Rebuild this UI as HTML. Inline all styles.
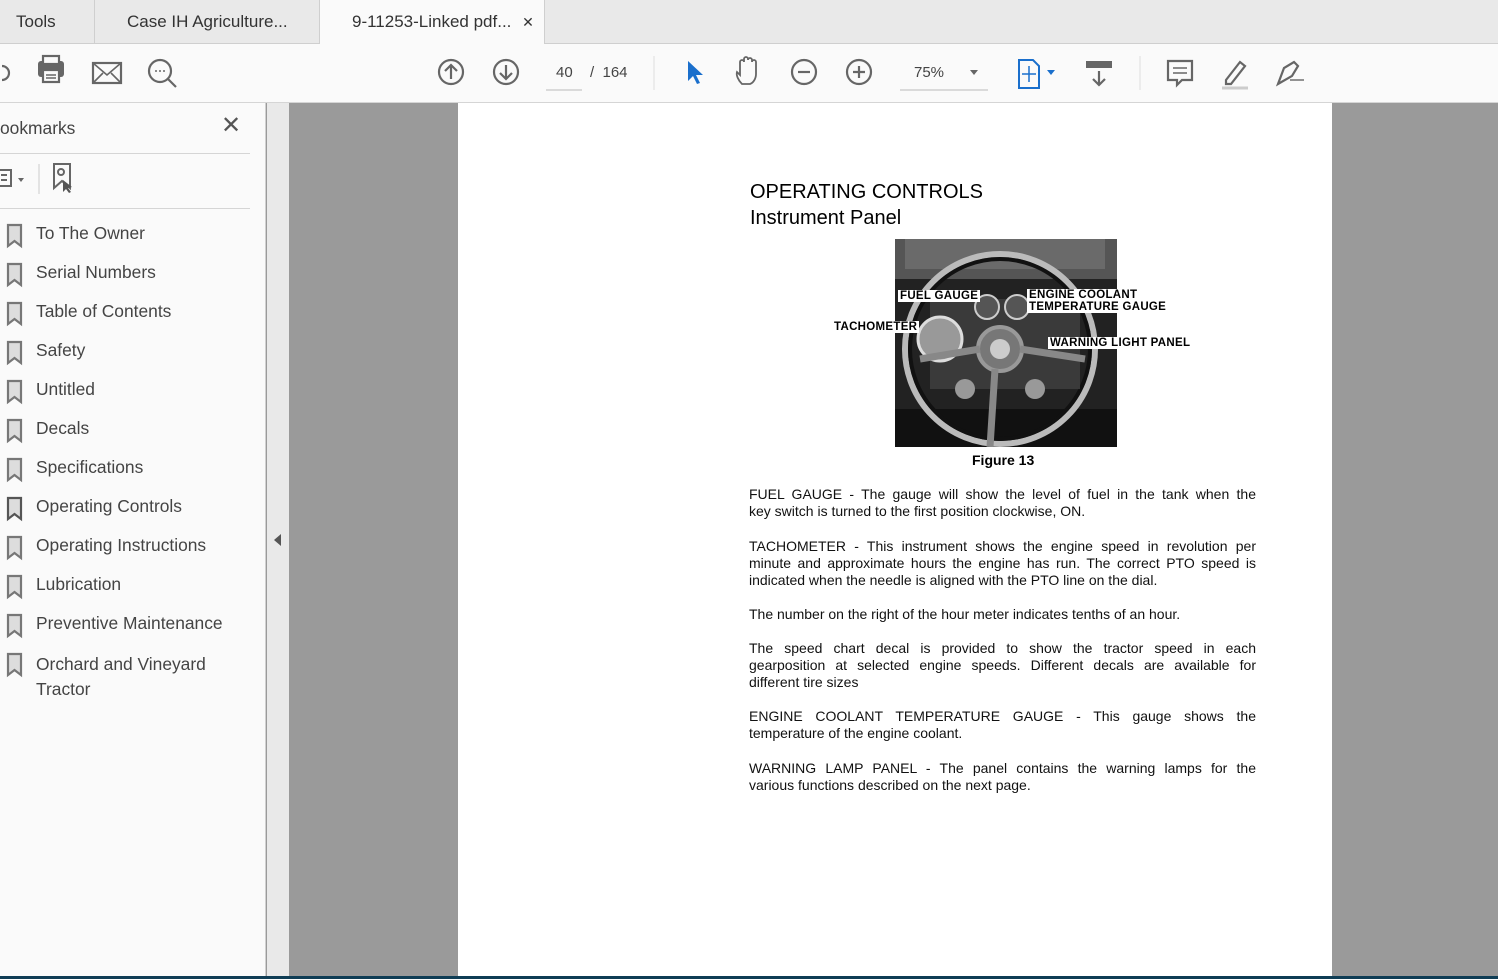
<!DOCTYPE html>
<html><head><meta charset="utf-8"><style>
*{margin:0;padding:0;box-sizing:border-box}
body{width:1498px;height:979px;overflow:hidden;position:relative;background:#9a9a9a;font-family:"Liberation Sans",sans-serif}
.abs{position:absolute}
#tabs{left:0;top:0;width:1498px;height:44px;background:#e9e9e9;border-bottom:1px solid #cfcfcf}
.tab{position:absolute;top:0;height:44px;font-size:17px;color:#333;line-height:44px;border-right:1px solid #cfcfcf}
#tb{left:0;top:44px;width:1498px;height:59px;background:#fafafa;border-bottom:1px solid #d5d5d5}
#side{left:0;top:103px;width:266px;height:873px;background:#fafafa;border-right:1px solid #d0d0d0}
#strip{left:267px;top:103px;width:22px;height:873px;background:#e9e9e9}
#page{left:458px;top:103px;width:874px;height:873px;background:#fff}
.bm{position:absolute;left:36px;font-size:17.4px;color:#444}
.p{position:absolute;left:749px;width:507px;font-size:14px;line-height:17px;color:#111}
.p div{text-align:justify;text-align-last:justify;height:17px;white-space:nowrap}
.p div.l{text-align-last:left}
.lbl{position:absolute;background:#fff;font-weight:bold;font-size:11.5px;letter-spacing:0.3px;color:#000;line-height:12px;padding:0 2px}
svg{position:absolute}
</style></head><body>
<div id="tabs" class="abs">
<div class="tab" style="left:0;width:95px;padding-left:16px">Tools</div>
<div class="tab" style="left:95px;width:225px;padding-left:32px">Case IH Agriculture...</div>
<div class="tab" style="left:320px;width:225px;padding-left:32px;background:#fafafa;height:45px">9-11253-Linked pdf... <span style="font-size:14px;margin-left:6px">✕</span></div>
</div>
<div id="tb" class="abs">
<svg width="1498" height="59" style="left:0;top:0" fill="none" stroke="#666" stroke-width="2.2">
<path d="M2 22a6 6 0 0 1 0 14" />
<rect x="38" y="17" width="26" height="16" rx="3" fill="#666" stroke="none"/><rect x="43" y="12" width="16" height="8" fill="#fafafa"/><rect x="43" y="26" width="16" height="12" fill="#fafafa"/><path d="M46 31h10M46 34h10" stroke-width="1.5"/>
<rect x="93" y="19" width="28" height="20"/><path d="M93 19l14 12 14-12M93 39l10-10M121 39l-10-10" stroke-width="1.6"/>
<circle cx="160" cy="27" r="11"/><path d="M168 35l8 8"/><path d="M155 27h2M159 27h2M163 27h2" stroke-width="1.6"/>
<circle cx="451" cy="28" r="12"/><path d="M451 35V21M445 27l6-6 6 6"/>
<circle cx="506" cy="28" r="12"/><path d="M506 21v14M500 29l6 6 6-6"/>
<path d="M546 46h36" stroke="#bbb" stroke-width="1"/>
<path d="M654 12v34" stroke="#ddd" stroke-width="1"/>
<path d="M688 17l0 20 5-5 4 8 3-1-4-8 7 0z" fill="#1a6fcc" stroke="none"/>
<path d="M742 40c-4-4-6-9-5-12l3 3V18a2 2 0 0 1 4 0v-3a2 2 0 0 1 4 0v1a2 2 0 0 1 4 0v2a2 2 0 0 1 4 0v12c0 5-3 9-6 10z" stroke-width="1.8"/>
<circle cx="804" cy="28" r="12"/><path d="M798 28h12"/>
<circle cx="859" cy="28" r="12"/><path d="M853 28h12M859 22v12"/>
<path d="M900 46h88" stroke="#bbb" stroke-width="1"/><path d="M970 26h8l-4 5z" fill="#666" stroke="none"/>
<path d="M1019 16h14l6 6v22h-20z" stroke="#1a6fcc" stroke-width="2"/><path d="M1029 22v16M1022 30h14" stroke="#1a6fcc" stroke-width="1.5"/><path d="M1047 26h8l-4 5z" fill="#1a6fcc" stroke="none"/>
<rect x="1086" y="17" width="26" height="7" fill="#666" stroke="none"/><path d="M1099 27v14M1093 35l6 6 6-6"/>
<path d="M1140 12v34" stroke="#ddd" stroke-width="1"/>
<path d="M1168 17h24v19h-10l-5 5v-5h-9z"/><path d="M1173 24h14M1173 29h14" stroke-width="1.5"/>
<path d="M1226 36l14-18 5 4-14 18h-5z"/><path d="M1222 44h26" stroke="#ccc" stroke-width="3"/>
<path d="M1278 40l6-16 10-6 4 4-6 10-14 8z"/><path d="M1290 36h14" stroke-width="1.4"/>
</svg>
<div class="abs" style="left:556px;top:20px;font-size:15px;color:#444">40</div>
<div class="abs" style="left:590px;top:20px;font-size:15px;color:#444">/ &nbsp;164</div>
<div class="abs" style="left:914px;top:20px;font-size:15px;color:#444">75%</div>
</div>
<div id="side" class="abs">
<div class="abs" style="left:0;top:15px;font-size:17.4px;color:#444">ookmarks</div>
<div class="abs" style="left:221px;top:8px;font-size:24px;color:#555">✕</div>
<div class="abs" style="left:0;top:50px;width:250px;height:1px;background:#d5d5d5"></div>
<svg width="120" height="50" style="left:0;top:55px" fill="none" stroke="#666" stroke-width="2"><rect x="-4" y="12" width="15" height="16"/><path d="M1 17h6M1 22h6"/><path d="M18 20h6l-3 4z" fill="#666" stroke="none"/><path d="M39 6v30" stroke="#ccc" stroke-width="1"/><path d="M54 6h16v24l-8-7-8 7z"/><circle cx="61" cy="14" r="3"/><path d="M63 22l0 12 3-3 3 4 2-1-3-4 4-1z" fill="#555" stroke="none"/></svg>
<div class="abs" style="left:0;top:105px;width:250px;height:1px;background:#d5d5d5"></div>
</div>
<div id="strip" class="abs"><div class="abs" style="left:7px;top:431px;width:0;height:0;border-top:6px solid transparent;border-bottom:6px solid transparent;border-right:7px solid #555"></div></div>
<svg width="30" height="480" style="left:0;top:222px" fill="#ddd" stroke="#777" stroke-width="2.2">
<g id="b"><path d="M8 3h13v21l-6.5-5-6.5 5z"/></g>
<use href="#b" y="39"/><use href="#b" y="78"/><use href="#b" y="117"/><use href="#b" y="156"/><use href="#b" y="195"/><use href="#b" y="234"/>
<path d="M8 276h13v21l-6.5-5-6.5 5z" stroke="#555"/>
<use href="#b" y="312"/><use href="#b" y="351"/><use href="#b" y="390"/><use href="#b" y="429"/>
</svg>
<div class="bm" style="top:223px">To The Owner</div>
<div class="bm" style="top:262px">Serial Numbers</div>
<div class="bm" style="top:301px">Table of Contents</div>
<div class="bm" style="top:340px">Safety</div>
<div class="bm" style="top:379px">Untitled</div>
<div class="bm" style="top:418px">Decals</div>
<div class="bm" style="top:457px">Specifications</div>
<div class="bm" style="top:496px">Operating Controls</div>
<div class="bm" style="top:535px">Operating Instructions</div>
<div class="bm" style="top:574px">Lubrication</div>
<div class="bm" style="top:613px">Preventive Maintenance</div>
<div class="bm" style="top:652px;line-height:25px">Orchard and Vineyard<br>Tractor</div>
<div id="page" class="abs"></div>
<div class="abs" style="left:750px;top:181px;font-size:20px;color:#000">OPERATING CONTROLS</div>
<div class="abs" style="left:750px;top:207px;font-size:20px;color:#000">Instrument Panel</div>
<svg width="222" height="208" style="left:895px;top:239px">
<rect width="222" height="208" fill="#222"/>
<rect x="0" y="0" width="222" height="40" fill="#555"/>
<rect x="10" y="0" width="200" height="30" fill="#6a6a6a"/>
<rect x="0" y="170" width="222" height="38" fill="#111"/>
<circle cx="105" cy="110" r="95" fill="none" stroke="#bbb" stroke-width="6"/>
<circle cx="105" cy="110" r="90" fill="none" stroke="#111" stroke-width="4"/>
<rect x="35" y="60" width="150" height="90" fill="#3a3a3a"/>
<circle cx="45" cy="100" r="22" fill="#999" stroke="#ddd" stroke-width="3"/>
<circle cx="92" cy="68" r="12" fill="#555" stroke="#ccc" stroke-width="2"/>
<circle cx="122" cy="68" r="12" fill="#555" stroke="#ccc" stroke-width="2"/>
<circle cx="105" cy="110" r="22" fill="#777" stroke="#999" stroke-width="4"/>
<circle cx="105" cy="110" r="10" fill="#ccc"/>
<path d="M85 110L25 120M125 110L190 120M100 130L95 208" stroke="#888" stroke-width="7"/>
<circle cx="70" cy="150" r="10" fill="#999"/><circle cx="140" cy="150" r="10" fill="#999"/>
</svg>
<div class="lbl" style="left:898px;top:290px">FUEL GAUGE</div>
<div class="lbl" style="left:1027px;top:289px;line-height:12px">ENGINE COOLANT<br>TEMPERATURE GAUGE</div>
<div class="lbl" style="left:832px;top:321px">TACHOMETER</div>
<div class="lbl" style="left:1048px;top:337px">WARNING LIGHT PANEL</div>
<div class="abs" style="left:972px;top:452px;font-size:14px;font-weight:bold;color:#000">Figure 13</div>
<div class="p" style="top:486px"><div>FUEL GAUGE - The gauge will show the level of fuel in the tank when the</div><div class="l">key switch is turned to the first position clockwise, ON.</div></div>
<div class="p" style="top:538px"><div>TACHOMETER - This instrument shows the engine speed in revolution per</div><div>minute and approximate hours the engine has run. The correct PTO speed is</div><div class="l">indicated when the needle is aligned with the PTO line on the dial.</div></div>
<div class="p" style="top:606px"><div class="l">The number on the right of the hour meter indicates tenths of an hour.</div></div>
<div class="p" style="top:640px"><div>The speed chart decal is provided to show the tractor speed in each</div><div>gearposition at selected engine speeds. Different decals are available for</div><div class="l">different tire sizes</div></div>
<div class="p" style="top:708px"><div>ENGINE COOLANT TEMPERATURE GAUGE - This gauge shows the</div><div class="l">temperature of the engine coolant.</div></div>
<div class="p" style="top:760px"><div>WARNING LAMP PANEL - The panel contains the warning lamps for the</div><div class="l">various functions described on the next page.</div></div>
<div class="abs" style="left:0;top:976px;width:1498px;height:3px;background:#0f3d55"></div>
</body></html>
